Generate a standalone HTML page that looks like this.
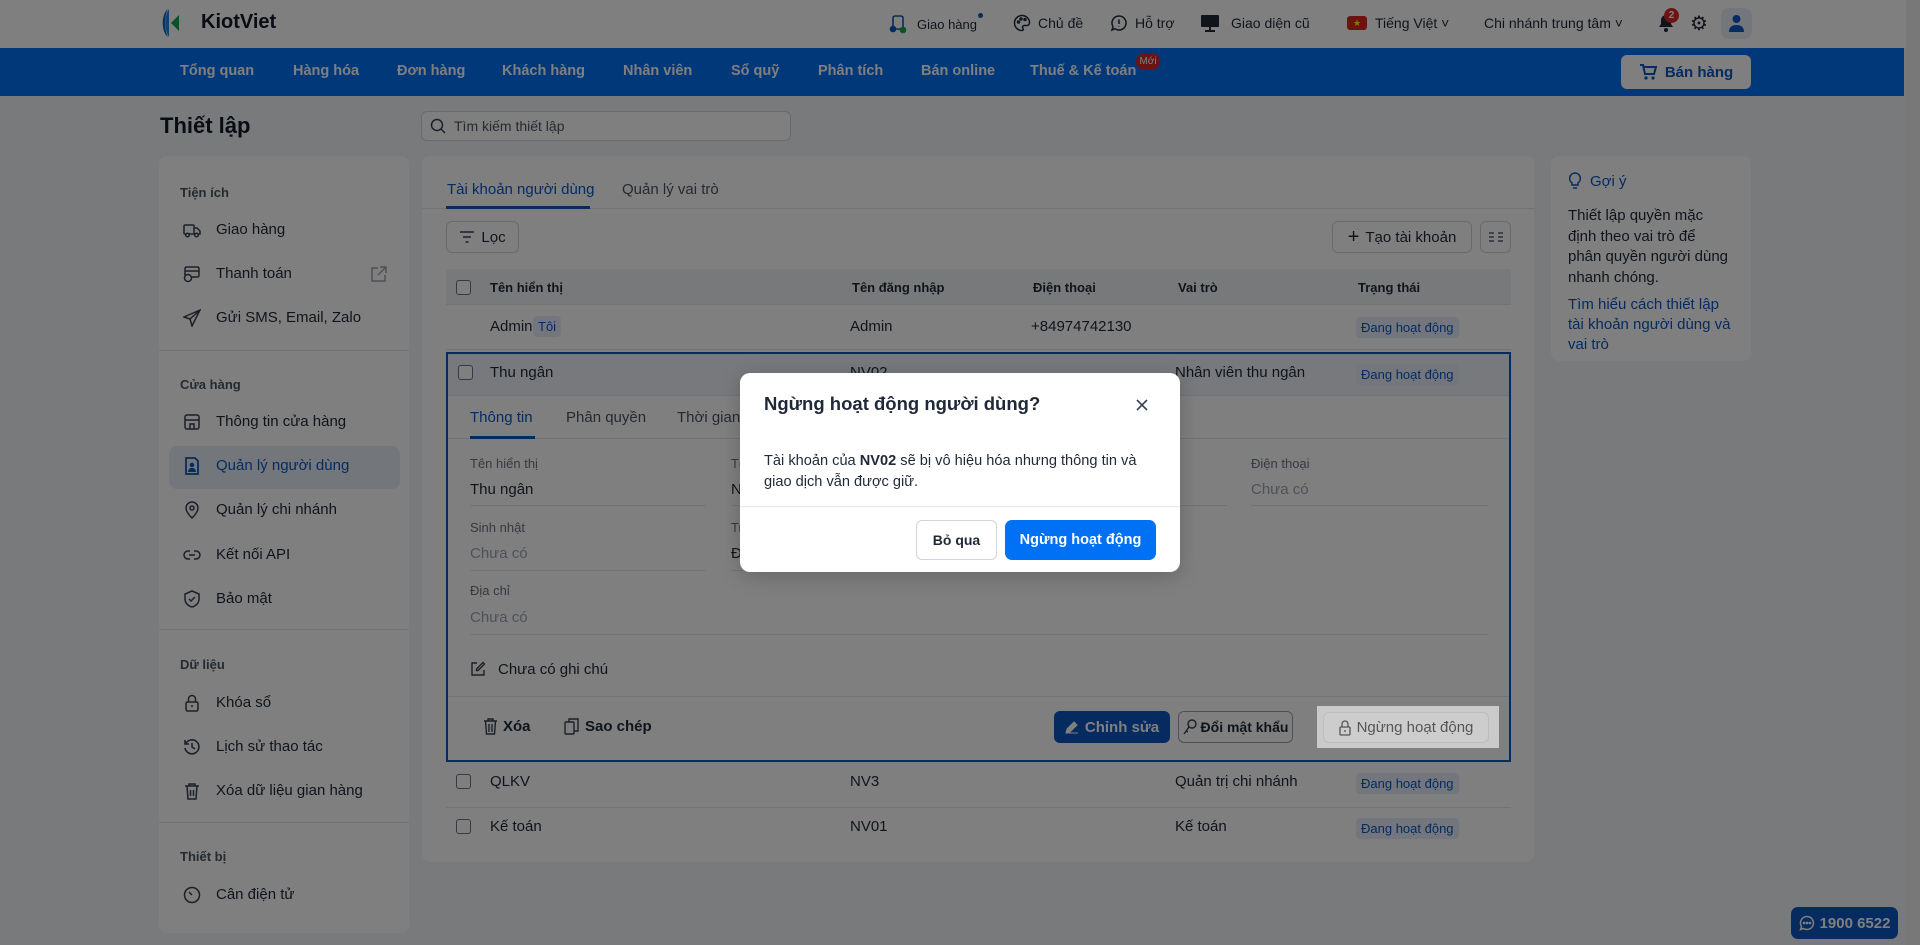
<!DOCTYPE html>
<html><head><meta charset="utf-8"><style>
*{box-sizing:border-box;margin:0;padding:0}
body{width:1920px;height:945px;overflow:hidden;background:#f3f4f6;font-family:"Liberation Sans",sans-serif;color:#1f2937;position:relative;font-size:15px}
.a{position:absolute}
.hdr{left:0;top:0;width:1906px;height:48px;background:#fff}
.nav{left:0;top:48px;width:1904px;height:48px;background:#0070f4}
.nav span{position:absolute;top:15px;color:#fff;font-weight:bold;font-size:14.5px;white-space:nowrap}
.scr{left:1906px;top:0;width:14px;height:945px;background:#f1f1f1}
.card{background:#fff;border-radius:8px}
.sec{position:absolute;left:180px;font-size:13px;color:#4b5563;font-weight:bold}
.it{position:absolute;left:216px;font-size:15px;color:#1f2937}
.ic{position:absolute;left:183px;width:18px;height:18px}
.dv{position:absolute;left:159px;width:250px;height:1px;background:#e5e7eb}
.btn{position:absolute;border:1px solid #d1d5db;border-radius:6px;background:#fff;font-size:14px;display:flex;align-items:center;justify-content:center;gap:6px;white-space:nowrap}
.th{position:absolute;top:280px;font-size:13px;font-weight:bold;color:#1f2937}
.cb{position:absolute;width:15px;height:15px;border:1.5px solid #6b7280;border-radius:3px;background:#fff}
.td{position:absolute;font-size:15px}
.tag{position:absolute;background:#e6effb;color:#0a56c2;font-size:13px;padding:3px 5px;border-radius:4px}
.lbl{position:absolute;font-size:13px;color:#6b7280}
.val{position:absolute;font-size:15px}
.ln{position:absolute;height:1px;background:#e5e7eb}
.ov{left:0;top:0;width:1920px;height:945px;background:rgba(0,0,0,.5)}
</style></head><body>
<div class="a hdr"></div>
<div class="a scr"></div>
<svg class="a" style="left:160px;top:8px" width="34" height="30" viewBox="0 0 34 30"><path d="M8 1 C1 6 1 24 8 29 C4 22 4 8 8 1Z" fill="#0a64c8"/><path d="M9 1 C4 8 4 22 9 29 L9 1Z" fill="#1e88e5"/><path d="M11 15 L19 7 L19 23Z" fill="#16a34a"/></svg>
<div class="a" style="left:201px;top:11px;font-size:20px;font-weight:bold;color:#111827">KiotViet</div>
<svg class="a" style="left:888px;top:14px" width="20" height="20" viewBox="0 0 20 20" fill="none" stroke="#0a56c2" stroke-width="1.6"><rect x="5" y="2" width="10" height="13" rx="2"/><circle cx="5" cy="15" r="2.5" fill="#0a56c2"/><circle cx="15" cy="16" r="2.5" fill="#16a34a" stroke="#16a34a"/></svg>
<div class="a" style="left:917px;top:17px;font-size:13px">Giao hàng</div>
<div class="a" style="left:978px;top:13px;width:5px;height:5px;border-radius:50%;background:#0a56c2"></div>
<svg class="a" style="left:1013px;top:14px" width="18" height="18" viewBox="0 0 18 18" fill="none" stroke="#1f2937" stroke-width="1.5"><path d="M9 1.5a7.5 7.5 0 1 0 0 15c1.5 0 1.5-1.5 .8-2.5s0-2.5 1.5-2.5h2.5a2.7 2.7 0 0 0 2.7-3C16.5 4.5 13 1.5 9 1.5z"/><circle cx="5.5" cy="8" r="1"/><circle cx="8" cy="5" r="1"/><circle cx="12" cy="5.5" r="1"/></svg>
<div class="a" style="left:1038px;top:15px;font-size:14px">Chủ đề</div>
<svg class="a" style="left:1110px;top:14px" width="18" height="18" viewBox="0 0 18 18" fill="none" stroke="#1f2937" stroke-width="1.5"><path d="M9 2a7 7 0 1 1-4 12.7L2 16l1-3.4A7 7 0 0 1 9 2z"/><path d="M9 5.5v4.5M9 12v.5"/></svg>
<div class="a" style="left:1135px;top:15px;font-size:14px">Hỗ trợ</div>
<svg class="a" style="left:1200px;top:13px" width="20" height="20" viewBox="0 0 20 20"><rect x="1" y="2" width="18" height="12" rx="1" fill="#1f2937"/><rect x="9" y="14" width="2" height="3" fill="#1f2937"/><rect x="5" y="17" width="10" height="2" fill="#1f2937"/></svg>
<div class="a" style="left:1231px;top:15px;font-size:14px">Giao diện cũ</div>
<div class="a" style="left:1347px;top:16px;width:20px;height:14px;background:#da251d;border-radius:3px;color:#ff0;font-size:9px;text-align:center;line-height:14px">★</div>
<div class="a" style="left:1375px;top:15px;font-size:14px">Tiếng Việt ˅</div>
<div class="a" style="left:1484px;top:15px;font-size:14px">Chi nhánh trung tâm ˅</div>
<svg class="a" style="left:1657px;top:13px" width="18" height="20" viewBox="0 0 18 20"><path d="M9 2a5 5 0 0 0-5 5v4l-2 3h14l-2-3V7a5 5 0 0 0-5-5z" fill="#1f2937"/><circle cx="9" cy="17" r="2" fill="#1f2937"/></svg>
<div class="a" style="left:1664px;top:8px;width:15px;height:15px;border-radius:50%;background:#dc2626;color:#fff;font-size:10px;text-align:center;line-height:15px;font-weight:bold">2</div>
<div class="a" style="left:1690px;top:11px;font-size:20px;color:#1f2937">⚙</div>
<div class="a" style="left:1721px;top:8px;width:31px;height:31px;border-radius:8px;background:#e6edf7"></div>
<svg class="a" style="left:1728px;top:14px" width="17" height="19" viewBox="0 0 17 19"><circle cx="8.5" cy="5" r="4" fill="#0a56c2"/><path d="M1 18c0-5 3-7 7.5-7s7.5 2 7.5 7z" fill="#0a56c2"/></svg>
<div class="a nav">
<span style="left:180px">Tổng quan</span><span style="left:293px">Hàng hóa</span><span style="left:397px">Đơn hàng</span><span style="left:502px">Khách hàng</span><span style="left:623px">Nhân viên</span><span style="left:731px">Sổ quỹ</span><span style="left:818px">Phân tích</span><span style="left:921px">Bán online</span><span style="left:1030px">Thuế &amp; Kế toán</span>
<div class="a" style="left:1136px;top:5px;width:24px;height:17px;border-radius:9px;background:#dc2626;color:#fff;font-size:10px;text-align:center;line-height:17px">Mới</div>
<div class="a" style="left:1621px;top:7px;width:130px;height:34px;background:#fff;border-radius:6px;color:#0a56c2;font-weight:bold;font-size:15px;display:flex;align-items:center;justify-content:center;gap:8px"><svg width="18" height="18" viewBox="0 0 18 18"><path d="M1 2h3l2 9h9l2-7H5" fill="none" stroke="#0a56c2" stroke-width="2"/><circle cx="7" cy="15" r="1.6" fill="#0a56c2"/><circle cx="14" cy="15" r="1.6" fill="#0a56c2"/></svg>Bán hàng</div>
</div>
<div class="a" style="left:160px;top:113px;font-size:22px;font-weight:bold;color:#111827">Thiết lập</div>
<div class="a" style="left:421px;top:111px;width:370px;height:30px;border:1px solid #d1d5db;border-radius:6px;background:#fff"></div>
<svg class="a" style="left:430px;top:118px" width="16" height="16" viewBox="0 0 16 16" fill="none" stroke="#374151" stroke-width="1.5"><circle cx="7" cy="7" r="5.5"/><path d="M11 11l4 4"/></svg>
<div class="a" style="left:454px;top:118px;font-size:14px;color:#4b5563">Tìm kiếm thiết lập</div>
<div class="a card" style="left:159px;top:156px;width:250px;height:777px"></div>
<div class="sec" style="top:185px">Tiện ích</div>
<svg class="ic" style="top:221px" viewBox="0 0 18 18" fill="none" stroke="#374151" stroke-width="1.5"><rect x="1" y="4" width="10" height="9" rx="1"/><path d="M11 7h3l3 3v3h-6"/><circle cx="4.5" cy="14" r="1.8" fill="#fff"/><circle cx="13.5" cy="14" r="1.8" fill="#fff"/></svg>
<div class="it" style="top:221px">Giao hàng</div>
<svg class="ic" style="top:265px" viewBox="0 0 18 18" fill="none" stroke="#374151" stroke-width="1.5"><rect x="2" y="2" width="14" height="10" rx="1.5"/><path d="M2 6h14"/><circle cx="5" cy="13" r="3.5" fill="#fff"/></svg>
<div class="it" style="top:265px">Thanh toán</div>
<svg class="a" style="left:370px;top:266px" width="17" height="17" viewBox="0 0 17 17" fill="none" stroke="#9ca3af" stroke-width="1.5"><path d="M8 2H2v13h13V9M10 1h6v6M16 1L8 9"/></svg>
<svg class="ic" style="top:309px" viewBox="0 0 18 18" fill="none" stroke="#374151" stroke-width="1.5"><path d="M17 1L1 8l6 2 2 7z M7 10l10-9"/></svg>
<div class="it" style="top:309px">Gửi SMS, Email, Zalo</div>
<div class="dv" style="top:350px"></div>
<div class="sec" style="top:377px">Cửa hàng</div>
<svg class="ic" style="top:413px" viewBox="0 0 18 18" fill="none" stroke="#374151" stroke-width="1.5"><rect x="2" y="2" width="14" height="14" rx="2"/><path d="M2 7h14M7 16v-5h4v5"/></svg>
<div class="it" style="top:413px">Thông tin cửa hàng</div>
<div class="a" style="left:169px;top:446px;width:231px;height:43px;background:#e6edf7;border-radius:8px"></div>
<svg class="ic" style="top:457px" viewBox="0 0 18 18"><path d="M3 1h9l3 3v13H3z" fill="none" stroke="#0a56c2" stroke-width="1.8"/><circle cx="9" cy="8" r="2.3" fill="#0a56c2"/><path d="M5 15c0-3 2-4 4-4s4 1 4 4z" fill="#0a56c2"/></svg>
<div class="it" style="top:457px;color:#0a56c2">Quản lý người dùng</div>
<svg class="ic" style="top:501px" viewBox="0 0 18 18" fill="none" stroke="#374151" stroke-width="1.5"><path d="M9 17s6-5.5 6-10A6 6 0 0 0 3 7c0 4.5 6 10 6 10z"/><circle cx="9" cy="7" r="2"/></svg>
<div class="it" style="top:501px">Quản lý chi nhánh</div>
<svg class="ic" style="top:546px" viewBox="0 0 18 18" fill="none" stroke="#374151" stroke-width="1.5"><path d="M7 5H5a4 4 0 0 0 0 8h2M11 5h2a4 4 0 0 1 0 8h-2M6 9h6"/></svg>
<div class="it" style="top:546px">Kết nối API</div>
<svg class="ic" style="top:590px" viewBox="0 0 18 18" fill="none" stroke="#374151" stroke-width="1.5"><path d="M9 1l7 3v5c0 4-3 7-7 8-4-1-7-4-7-8V4z"/><path d="M6 9l2 2 4-4"/></svg>
<div class="it" style="top:590px">Bảo mật</div>
<div class="dv" style="top:629px"></div>
<div class="sec" style="top:657px">Dữ liệu</div>
<svg class="ic" style="top:694px" viewBox="0 0 18 18" fill="none" stroke="#374151" stroke-width="1.5"><rect x="3" y="8" width="12" height="9" rx="1.5"/><path d="M5.5 8V5a3.5 3.5 0 0 1 7 0v3M9 11v2"/></svg>
<div class="it" style="top:694px">Khóa sổ</div>
<svg class="ic" style="top:738px" viewBox="0 0 18 18" fill="none" stroke="#374151" stroke-width="1.6"><path d="M2.5 6A7 7 0 1 1 2 10M2 2v4h4M9 5v4l3 2"/></svg>
<div class="it" style="top:738px">Lịch sử thao tác</div>
<svg class="ic" style="top:782px" viewBox="0 0 18 18" fill="none" stroke="#374151" stroke-width="1.5"><path d="M2 4h14M6 4V2h6v2M4 4l1 13h8l1-13M7.5 8v6M10.5 8v6"/></svg>
<div class="it" style="top:782px">Xóa dữ liệu gian hàng</div>
<div class="dv" style="top:822px"></div>
<div class="sec" style="top:849px">Thiết bị</div>
<svg class="ic" style="top:886px" viewBox="0 0 18 18" fill="none" stroke="#374151" stroke-width="1.5"><circle cx="9" cy="9" r="7.5"/><path d="M9 9L6 6"/></svg>
<div class="it" style="top:886px">Cân điện tử</div>
<div class="a card" style="left:422px;top:156px;width:1112px;height:706px"></div>
<div class="a" style="left:447px;top:181px;font-size:15px;color:#0a56c2">Tài khoản người dùng</div>
<div class="a" style="left:622px;top:181px;font-size:15px;color:#4b5563">Quản lý vai trò</div>
<div class="a" style="left:422px;top:208px;width:1112px;height:1px;background:#e5e7eb"></div>
<div class="a" style="left:446px;top:206px;width:144px;height:3px;background:#0a56c2"></div>
<div class="btn" style="left:446px;top:221px;width:73px;height:32px;font-size:15px"><svg width="16" height="14" viewBox="0 0 16 14" stroke="#374151" stroke-width="1.5"><path d="M1 2h14M4 7h8M6.5 12h3"/></svg>Lọc</div>
<div class="btn" style="left:1332px;top:221px;width:140px;height:32px;font-size:15px"><span style="font-size:20px;font-weight:300">+</span>Tạo tài khoản</div>
<div class="btn" style="left:1480px;top:221px;width:31px;height:32px"><svg width="14" height="12" viewBox="0 0 14 12" stroke="#374151" stroke-width="1.3"><path d="M0 2h5M0 6h5M0 10h5M9 2h5M9 6h5M9 10h5"/></svg></div>
<div class="a" style="left:446px;top:269px;width:1065px;height:36px;background:#f1f2f4;border-bottom:1px solid #e5e7eb"></div>
<div class="cb" style="left:456px;top:280px"></div>
<div class="th" style="left:490px">Tên hiển thị</div><div class="th" style="left:852px">Tên đăng nhập</div><div class="th" style="left:1033px">Điện thoại</div><div class="th" style="left:1178px">Vai trò</div><div class="th" style="left:1358px">Trạng thái</div>
<div class="td" style="left:490px;top:318px">Admin</div>
<div class="tag" style="left:533px;top:316px">Tôi</div>
<div class="td" style="left:850px;top:318px">Admin</div>
<div class="td" style="left:1031px;top:318px">+84974742130</div>
<div class="tag" style="left:1356px;top:317px">Đang hoạt động</div>
<div class="a" style="left:446px;top:349px;width:1065px;height:1px;background:#e5e7eb"></div>
<div class="a" style="left:446px;top:352px;width:1065px;height:410px;border:2px solid #0a56c2;background:#fff"></div>
<div class="a" style="left:448px;top:354px;width:1061px;height:42px;background:#eef2f8;border-bottom:1px solid #e5e7eb"></div>
<div class="cb" style="left:458px;top:365px"></div>
<div class="td" style="left:490px;top:364px">Thu ngân</div>
<div class="td" style="left:850px;top:364px">NV02</div>
<div class="td" style="left:1175px;top:364px">Nhân viên thu ngân</div>
<div class="tag" style="left:1356px;top:364px">Đang hoạt động</div>
<div class="a" style="left:470px;top:409px;font-size:15px;color:#0a56c2">Thông tin</div>
<div class="a" style="left:566px;top:409px;font-size:15px;color:#4b5563">Phân quyền</div>
<div class="a" style="left:677px;top:409px;font-size:15px;color:#4b5563">Thời gian</div>
<div class="a" style="left:448px;top:438px;width:1061px;height:1px;background:#e5e7eb"></div>
<div class="a" style="left:470px;top:436px;width:65px;height:3px;background:#0a56c2"></div>
<div class="lbl" style="left:470px;top:456px">Tên hiển thị</div><div class="val" style="left:470px;top:481px">Thu ngân</div><div class="ln" style="left:470px;top:505px;width:236px"></div>
<div class="lbl" style="left:731px;top:456px">Tên đăng nhập</div><div class="val" style="left:731px;top:481px">NV02</div><div class="ln" style="left:731px;top:505px;width:236px"></div>
<div class="ln" style="left:991px;top:505px;width:236px"></div>
<div class="lbl" style="left:1251px;top:456px">Điện thoại</div><div class="val" style="left:1251px;top:481px;color:#9ca3af">Chưa có</div><div class="ln" style="left:1251px;top:505px;width:237px"></div>
<div class="lbl" style="left:470px;top:520px">Sinh nhật</div><div class="val" style="left:470px;top:545px;color:#9ca3af">Chưa có</div><div class="ln" style="left:470px;top:570px;width:236px"></div>
<div class="lbl" style="left:731px;top:520px">Trạng thái</div><div class="val" style="left:731px;top:545px">Đang hoạt động</div><div class="ln" style="left:731px;top:570px;width:236px"></div>
<div class="lbl" style="left:470px;top:583px">Địa chỉ</div><div class="val" style="left:470px;top:609px;color:#9ca3af">Chưa có</div><div class="ln" style="left:470px;top:634px;width:1018px"></div>
<svg class="a" style="left:470px;top:661px" width="16" height="16" viewBox="0 0 16 16" fill="none" stroke="#374151" stroke-width="1.4"><path d="M7 2H2v12h12V9M13 1.5l1.5 1.5L8 9.5H6.5V8z"/></svg>
<div class="a" style="left:498px;top:661px;font-size:15px">Chưa có ghi chú</div>
<div class="a" style="left:448px;top:696px;width:1061px;height:1px;background:#e5e7eb"></div>
<svg class="a" style="left:483px;top:718px" width="15" height="17" viewBox="0 0 15 17" fill="none" stroke="#374151" stroke-width="1.4"><path d="M1 3h13M5 3V1h5v2M2.5 3l1 13h8l1-13M6 6v8M9 6v8"/></svg>
<div class="a" style="left:503px;top:718px;font-size:15px;font-weight:bold">Xóa</div>
<svg class="a" style="left:564px;top:718px" width="15" height="17" viewBox="0 0 15 17" fill="none" stroke="#374151" stroke-width="1.4"><rect x="1" y="4" width="9" height="12" rx="1"/><path d="M5 4V1h9v12h-4"/></svg>
<div class="a" style="left:585px;top:718px;font-size:15px;font-weight:bold">Sao chép</div>
<div class="a" style="left:1054px;top:711px;width:116px;height:32px;background:#0a56c2;border-radius:6px;color:#fff;font-weight:bold;font-size:15px;display:flex;align-items:center;justify-content:center;gap:6px"><svg width="14" height="14" viewBox="0 0 14 14"><path d="M1 13l1-4 7-7 3 3-7 7z M1 13h12" fill="#fff" stroke="#fff" stroke-width="1"/></svg>Chỉnh sửa</div>
<div class="btn" style="left:1178px;top:711px;width:115px;height:32px;font-weight:bold;font-size:14px;border-color:#9ca3af;gap:4px"><svg width="14" height="16" viewBox="0 0 14 16" fill="none" stroke="#374151" stroke-width="1.4"><circle cx="9" cy="5" r="4"/><path d="M6 8l-5 7M3 12l2 1"/></svg>Đổi mật khẩu</div>
<div class="td" style="left:490px;top:773px">QLKV</div>
<div class="td" style="left:850px;top:773px">NV3</div>
<div class="td" style="left:1175px;top:773px">Quản trị chi nhánh</div>
<div class="tag" style="left:1356px;top:773px">Đang hoạt động</div>
<div class="cb" style="left:456px;top:774px"></div>
<div class="a" style="left:446px;top:807px;width:1065px;height:1px;background:#e5e7eb"></div>
<div class="cb" style="left:456px;top:819px"></div>
<div class="td" style="left:490px;top:818px">Kế toán</div>
<div class="td" style="left:850px;top:818px">NV01</div>
<div class="td" style="left:1175px;top:818px">Kế toán</div>
<div class="tag" style="left:1356px;top:818px">Đang hoạt động</div>
<div class="a card" style="left:1551px;top:156px;width:200px;height:205px"></div>
<svg class="a" style="left:1568px;top:172px" width="14" height="18" viewBox="0 0 14 18" fill="none" stroke="#0a56c2" stroke-width="1.5"><path d="M7 1a5.5 5.5 0 0 0-3 10v2h6v-2A5.5 5.5 0 0 0 7 1zM5 16h4"/></svg>
<div class="a" style="left:1590px;top:173px;font-size:15px;color:#0a56c2">Gợi ý</div>
<div class="a" style="left:1568px;top:206px;width:160px;font-size:15px;line-height:20.5px;color:#1f2937">Thiết lập quyền mặc định theo vai trò để phân quyền người dùng nhanh chóng.</div>
<div class="a" style="left:1568px;top:295px;width:165px;font-size:15px;line-height:20px;color:#0a56c2">Tìm hiểu cách thiết lập tài khoản người dùng và vai trò</div>
<div class="a" style="left:1791px;top:907px;width:107px;height:32px;background:#0a56c2;border-radius:7px;color:#fff;font-weight:bold;font-size:15px;display:flex;align-items:center;justify-content:center;gap:5px"><svg width="16" height="16" viewBox="0 0 16 16" fill="none" stroke="#fff" stroke-width="1.5"><path d="M8 1.5a6.5 6.5 0 1 1-3.5 12L1.5 14.5l1-3A6.5 6.5 0 0 1 8 1.5z"/><circle cx="5" cy="8" r=".6"/><circle cx="8" cy="8" r=".6"/><circle cx="11" cy="8" r=".6"/></svg>1900 6522</div>
<div class="a ov"></div>
<div class="a" style="left:1317px;top:706px;width:182px;height:42px;background:#cacaca"></div>
<div class="btn" style="left:1323px;top:712px;width:166px;height:31px;background:#cdcdcd;border-color:#bdbdbd;color:#555;font-size:15px"><svg width="12" height="16" viewBox="0 0 12 16" fill="none" stroke="#555" stroke-width="1.3"><rect x="1" y="7" width="10" height="8" rx="1"/><path d="M3 7V4a3 3 0 0 1 6 0v3M6 10v2"/></svg>Ngừng hoạt động</div>
<div class="a" style="left:740px;top:373px;width:440px;height:199px;background:#fff;border-radius:10px;box-shadow:0 4px 20px rgba(0,0,0,.2)">
<div class="a" style="left:24px;top:20px;font-size:18.5px;font-weight:bold;color:#1f2937">Ngừng hoạt động người dùng?</div>
<svg class="a" style="left:396px;top:26px" width="12" height="12" viewBox="0 0 12 12" stroke="#374151" stroke-width="1.6"><path d="M1 1l10 10M11 1L1 11"/></svg>
<div class="a" style="left:24px;top:78px;width:392px;font-size:14.6px;line-height:21px;color:#1f2937">Tài khoản của <b>NV02</b> sẽ bị vô hiệu hóa nhưng thông tin và giao dịch vẫn được giữ.</div>
<div class="a" style="left:0;top:133px;width:440px;height:1px;background:#e5e7eb"></div>
<div class="btn" style="left:176px;top:147px;width:81px;height:40px;font-weight:bold;font-size:14px">Bỏ qua</div>
<div class="a" style="left:265px;top:147px;width:151px;height:40px;background:#0070f4;border-radius:7px;color:#fff;font-weight:bold;font-size:14.5px;display:flex;align-items:center;justify-content:center">Ngừng hoạt động</div>
</div>
</body></html>
